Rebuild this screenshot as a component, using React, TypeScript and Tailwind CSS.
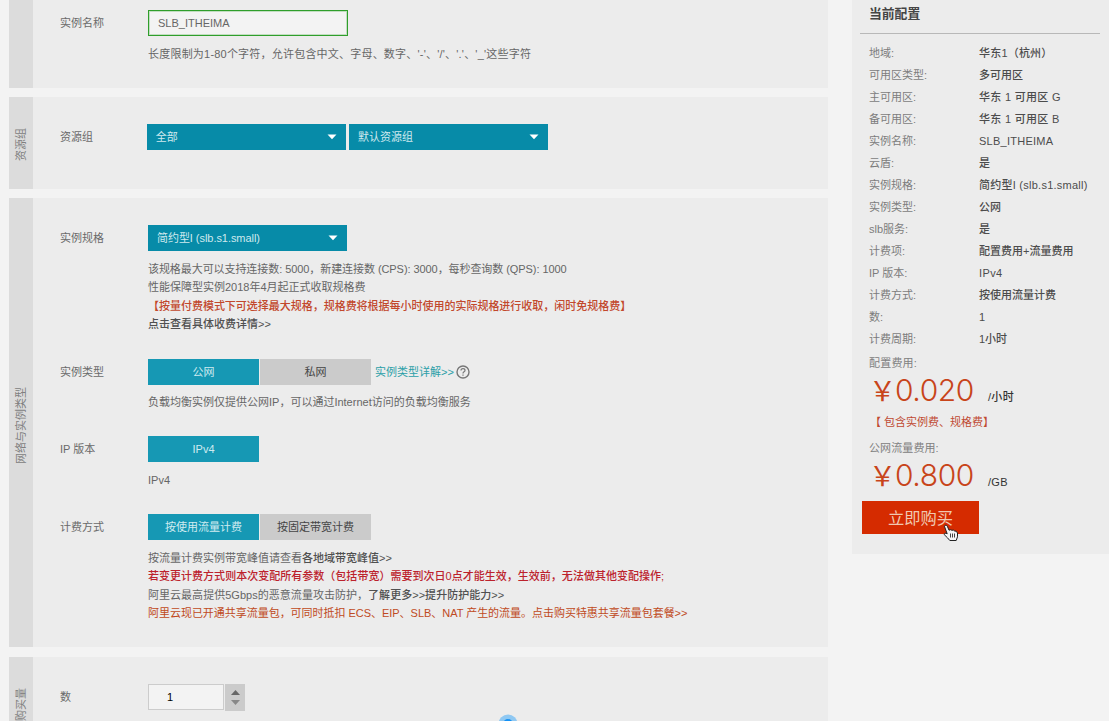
import type { ReactNode } from "react";

function Section({ title, className, titleClass, children }: { title?: string; className: string; titleClass?: string; children: ReactNode }) {
  return (
    <section className={`flex w-[819px] shrink-0 bg-[#ececec] ${className}`}>
      <div className={`flex w-6 shrink-0 justify-center bg-[#dcdcdc] text-[#808080] ${titleClass ?? "items-center"}`}>
        {title && <span className="rotate-180 leading-[14px] [text-orientation:sideways] [writing-mode:vertical-rl]">{title}</span>}
      </div>
      <div className="flex min-w-0 flex-1 flex-col pl-[27px]">{children}</div>
    </section>
  );
}

function Row({ label, className, children }: { label: string; className?: string; children: ReactNode }) {
  return (
    <div className={`flex shrink-0 ${className ?? ""}`}>
      <div className="w-[88px] shrink-0 leading-[26px] text-[#6a6a6a]">{label}</div>
      <div className="flex flex-col">{children}</div>
    </div>
  );
}

function Select({ text }: { text: string }) {
  return (
    <div className="flex h-[26px] w-[199px] items-center justify-between bg-[#078ba8] pr-[9px] pl-[9px] tracking-[-0.05px] text-[#cfe9ee]">
      <span>{text}</span>
      <svg width="10" height="6" viewBox="0 0 10 6" className="fill-white">
        <path d="M0.5 0.5h9L5 5.3z" />
      </svg>
    </div>
  );
}

function Option({ text, active }: { text: string; active?: boolean }) {
  return (
    <div className={`flex h-[26px] w-[111px] items-center justify-center ${active ? "bg-[#1698b4] text-[#cfebf0]" : "bg-[#cbcbcb] text-[#454545]"}`}>
      {text}
    </div>
  );
}

const config: [string, string, string?][] = [
  ["地域:", "华东1（杭州）", "tracking-[0.2px]"],
  ["可用区类型:", "多可用区"],
  ["主可用区:", "华东 1 可用区 G", "tracking-[0.3px]"],
  ["备可用区:", "华东 1 可用区 B", "tracking-[0.3px]"],
  ["实例名称:", "SLB_ITHEIMA", "tracking-[0.25px]"],
  ["云盾:", "是"],
  ["实例规格:", "简约型I (slb.s1.small)", "tracking-[0.25px]"],
  ["实例类型:", "公网"],
  ["slb服务:", "是"],
  ["计费项:", "配置费用+流量费用"],
  ["IP 版本:", "IPv4", "tracking-[0.4px]"],
  ["计费方式:", "按使用流量计费"],
  ["数:", "1"],
  ["计费周期:", "1小时"],
];

function Price({ amount, unit }: { amount: string; unit: string }) {
  return (
    <div className="flex h-[34px] items-baseline text-[#c8441a]">
      <span className="w-[26px] text-[27px] leading-[36px]">￥</span>
      <span className="w-[93px] font-['Inter'] text-[30px] leading-[36px] font-[350] tracking-[-0.4px]">{amount}</span>
      <span className="font-medium tracking-[0.3px] text-[#333]">{unit}</span>
    </div>
  );
}

export default function App() {
  return (
    <div className="relative flex h-[721px] w-[1109px] items-start overflow-hidden bg-[#f3f3f3] pl-[9px] font-['Liberation_Sans','Noto_Sans_CJK_SC',sans-serif] text-[11px] whitespace-nowrap text-[#666]">
      <main className="flex h-[721px] w-[819px] flex-col overflow-hidden">
        <Section className="h-[88px]">
          <Row label="实例名称" className="pt-[10px]">
            <div className="flex h-[26px] w-[200px] items-center border border-[#2f9e2b] bg-[#f3f3f3] pl-[9px] text-[#666] outline outline-[#2f9e2b]/25 -outline-offset-2">SLB_ITHEIMA</div>
            <div className="mt-[9px] leading-[18px] tracking-[0.21px]">长度限制为1-80个字符，允许包含中文、字母、数字、'-'、'/'、'.'、'_'这些字符</div>
          </Row>
        </Section>

        <Section title="资源组" className="mt-[9px] h-[92px]" titleClass="items-center pt-[3px]">
          <Row label="资源组" className="pt-[27px]">
            <div className="-ml-[1.3px] flex gap-[3.4px]">
              <Select text="全部" />
              <Select text="默认资源组" />
            </div>
          </Row>
        </Section>

        <Section title="网络与实例类型" className="mt-[9px] h-[449px]" titleClass="items-center pt-[5px]">
          <Row label="实例规格" className="h-[161px] pt-[27px]">
            <Select text="简约型I (slb.s1.small)" />
            <div className="mt-[9px] leading-[18.3px]">
              <p className="tracking-[-0.07px]">该规格最大可以支持连接数: 5000，新建连接数 (CPS): 3000，每秒查询数 (QPS): 1000</p>
              <p>性能保障型实例2018年4月起正式收取规格费</p>
              <p className="font-medium tracking-[-0.02px] text-[#c2482c]">【按量付费模式下可选择最大规格，规格费将根据每小时使用的实际规格进行收取，闲时免规格费】</p>
              <p className="font-medium text-[#505050]">点击查看具体收费详情&gt;&gt;</p>
            </div>
          </Row>
          <Row label="实例类型" className="h-[77px]">
            <div className="flex items-center gap-px">
              <Option text="公网" active />
              <Option text="私网" />
              <span className="ml-[3px] text-[#2b9fa8]">实例类型详解&gt;&gt;</span>
              <svg width="14" height="14" viewBox="0 0 14 14" className="ml-px fill-none stroke-[#777]">
                <circle cx="7" cy="7" r="6" strokeWidth="1.4" />
                <path d="M5 5.6C5 4.3 5.8 3.7 7 3.7s2 .7 2 1.7c0 1.4-2 1.5-2 3M7 9.6v1.2" strokeWidth="1.2" />
              </svg>
            </div>
            <div className="mt-[8px] leading-[18px]">负载均衡实例仅提供公网IP，可以通过Internet访问的负载均衡服务</div>
          </Row>
          <Row label="IP 版本" className="h-[78px]">
            <Option text="IPv4" active />
            <div className="mt-[9px] leading-[18px]">IPv4</div>
          </Row>
          <Row label="计费方式">
            <div className="flex gap-px">
              <Option text="按使用流量计费" active />
              <Option text="按固定带宽计费" />
            </div>
            <div className="mt-[9px] leading-[18.3px]">
              <p>按流量计费实例带宽峰值请查看<span className="font-medium text-[#505050]">各地域带宽峰值&gt;&gt;</span></p>
              <p className="font-medium tracking-[0.02px] text-[#bc222c]">若变更计费方式则本次变配所有参数（包括带宽）需要到次日0点才能生效，生效前，无法做其他变配操作;</p>
              <p className="tracking-[0.03px]">阿里云最高提供5Gbps的恶意流量攻击防护，<span className="font-medium text-[#505050]">了解更多&gt;&gt;提升防护能力&gt;&gt;</span></p>
              <p className="tracking-[-0.03px] text-[#c04a22]">阿里云现已开通共享流量包，可同时抵扣 ECS、EIP、SLB、NAT 产生的流量。点击购买特惠共享流量包套餐&gt;&gt;</p>
            </div>
          </Row>
        </Section>

        <Section title="购买量" className="mt-[10px] h-[120px]" titleClass="items-start pt-[31px]">
          <Row label="数" className="pt-[27px]">
            <div className="flex">
              <div className="flex h-[26px] w-[76px] items-center border border-[#ccc] bg-[#f3f3f3] pl-[18px] text-black">1</div>
              <div className="ml-px flex h-[27px] w-5 flex-col items-center justify-center gap-[5px] bg-[#cbcbcb]">
                <svg width="9" height="5" viewBox="0 0 9 5" className="fill-[#666]"><path d="M0 5h9L4.500 0z" /></svg>
                <svg width="9" height="5" viewBox="0 0 9 5" className="fill-[#888]"><path d="M0 0h9L4.500 5z" /></svg>
              </div>
            </div>
          </Row>
        </Section>
      </main>

      <aside className="ml-6 flex h-[554px] w-[257px] flex-col bg-[#ececec] pl-2">
        <div className="h-[34px] w-[240px] border-b border-[#b8b8b8] pl-[9px] text-[12.8px] leading-[28px] font-bold text-[#444]">当前配置</div>
        <dl className="pt-[8px] pl-[9px]">
          {config.map(([label, value, spacing]) => (
            <div key={label} className="flex h-[22px] items-center">
              <dt className="w-[110px] text-[#7c7c7c]">{label}</dt>
              <dd className={`font-medium text-[#4c4c4c] ${spacing ?? ""}`}>{value}</dd>
            </div>
          ))}
        </dl>
        <div className="flex flex-col pl-[9px] text-[#808080]">
          <div className="h-[22px] pt-[3px] leading-[20px] tracking-[0.2px]">配置费用:</div>
          <Price amount="0.020" unit="/小时" />
          <div className="mt-[5px] h-[22px] pl-px leading-[23px] text-[#c04a32]">【 包含实例费、规格费】</div>
          <div className="mt-[4px] h-[20px] leading-[22px] tracking-[0.1px]">公网流量费用:</div>
          <Price amount="0.800" unit="/GB" />
        </div>
        <button className="mt-[10px] ml-[2px] h-[33px] w-[117px] shrink-0 bg-[#d52b00] pt-[2px] text-[16.3px] text-[#f0c8b0]">立即购买</button>
      </aside>

      <svg className="absolute top-[524px] left-[943px]" width="16" height="18" viewBox="0 0 16 18">
        <path d="M1.400 2.200c.6-1.400 2.300-1.400 2.900 0L6 6.200l1.500-.5 1.400.6 1.500-.2 1.200.9 1.600.2 1.300 1.800v3.800L13.200 16.500H6.800L4.500 13.800 1.200 10.600c-.1-1.500 1.400-1.900 3-.8z" fill="#f5f5f5" stroke="#222" strokeWidth="1" />
        <path d="M7.500 9.500v4M9.500 9.500v4M11.500 9.500v4" stroke="#444" strokeWidth="1" />
      </svg>
      <svg className="absolute top-[714px] left-[498px]" width="20" height="7" viewBox="0 0 20 7">
        <circle cx="10" cy="10" r="9.500" fill="#8fc8f2" />
        <circle cx="10" cy="10" r="5" fill="#1491f5" />
      </svg>
    </div>
  );
}
